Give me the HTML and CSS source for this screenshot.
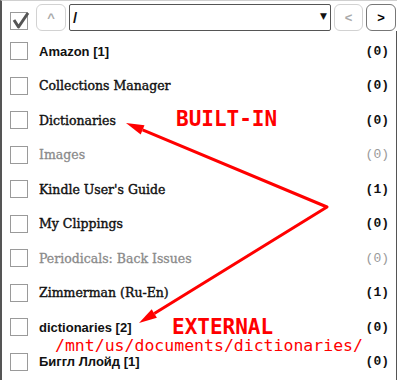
FILE: index.html
```html
<!DOCTYPE html>
<html lang="en">
<head>
  <meta charset="UTF-8">
  <title>Collections</title>
  <link rel="stylesheet" href="styles.css">
</head>
<body>
  <div class="screen">
    <!-- top toolbar -->
    <div class="toolbar">
      <span class="box checked">
        <svg width="20" height="18" viewBox="0 0 20 18"><path d="M3 8 L7.5 15 L17 1" fill="none" stroke="#555" stroke-width="3" stroke-linejoin="round"/></svg>
      </span>
      <button class="nav up">^</button>
      <div class="select">
        <span class="path">/</span>
        <span class="caret">▼</span>
      </div>
      <button class="nav prev">&lt;</button>
      <button class="nav next">&gt;</button>
    </div>

    <!-- collection list -->
    <div class="list">
      <div class="row"><span class="box"></span><span class="name sans">Amazon [1]</span><span class="count">(0)</span></div>
      <div class="row"><span class="box"></span><span class="name">Collections Manager</span><span class="count">(0)</span></div>
      <div class="row"><span class="box"></span><span class="name">Dictionaries</span><span class="count">(0)</span></div>
      <div class="row dim"><span class="box"></span><span class="name">Images</span><span class="count">(0)</span></div>
      <div class="row"><span class="box"></span><span class="name">Kindle User's Guide</span><span class="count">(1)</span></div>
      <div class="row"><span class="box"></span><span class="name">My Clippings</span><span class="count">(0)</span></div>
      <div class="row dim"><span class="box"></span><span class="name">Periodicals: Back Issues</span><span class="count">(0)</span></div>
      <div class="row"><span class="box"></span><span class="name">Zimmerman (Ru-En)</span><span class="count">(1)</span></div>
      <div class="row"><span class="box"></span><span class="name sans">dictionaries [2]</span><span class="count">(0)</span></div>
      <div class="row"><span class="box"></span><span class="name sans">Биггл Ллойд [1]</span><span class="count">(0)</span></div>
    </div>

    <!-- red annotations drawn over the list -->
    <svg class="notes" width="400" height="380" viewBox="0 0 400 380">
      <polyline points="142.6,129.9 327,207 154.3,313.5" fill="none" stroke="#f00" stroke-width="3" stroke-linejoin="round"/>
      <polygon points="126,123 144.5,125.3 140.7,134.5" fill="#f00"/>
      <polygon points="139,323 156.9,317.8 151.7,309.3" fill="#f00"/>
      <text class="label" x="176" y="126">BUILT-IN</text>
      <text class="label" x="172" y="334">EXTERNAL</text>
      <text class="label small" x="55" y="351">/mnt/us/documents/dictionaries/</text>
    </svg>
  </div>
</body>
</html>
```

FILE: styles.css
```css
/* Global */
* {
  box-sizing: border-box;
}

body {
  margin: 0;
  background: #fff;
  color: #111;
  font-family: "DejaVu Serif", serif;
}

.screen {
  position: relative;
  width: 397px;
  height: 380px;
  border-left: 2px solid #555;
  border-top: 1px solid #d0d0d0;
  overflow: hidden;
}

/* Toolbar */
.toolbar {
  display: flex;
  align-items: flex-start;
  gap: 3px;
  padding: 3px 0 0 8px;
}

.box {
  display: block;
  flex: none;
  width: 18px;
  height: 18px;
  border: 1px solid #9a9a9a;
  background: #fff;
}

.box.checked {
  position: relative;
  margin: 8px 5px 0 0;
}

.box.checked svg {
  position: absolute;
  left: 0;
  top: -1px;
}

.nav {
  width: 30px;
  height: 27px;
  padding: 0;
  border: 1px solid #d2d2d2;
  border-radius: 6px;
  background: #fff;
  color: #aaa;
  font-family: "Liberation Sans", sans-serif;
  font-size: 13px;
  font-weight: bold;
}

.nav.prev {
  width: 29px;
}

.nav.next {
  border-color: #777;
  color: #000;
}

.select {
  display: flex;
  align-items: center;
  justify-content: space-between;
  width: 262px;
  height: 27px;
  padding: 0 3px 0 3px;
  border: 1px solid #555;
  border-radius: 2px;
}

.path {
  font-family: "Liberation Sans", sans-serif;
  font-size: 15px;
  font-weight: bold;
}

.caret {
  font-family: "DejaVu Sans", sans-serif;
  font-size: 9px;
  margin-top: -3px;
}

/* List */
.list {
  border-right: 1px solid #555;
  padding-top: 3px;
  height: 360px;
}

.row {
  display: flex;
  align-items: center;
  height: 34.5px;
  padding: 0 7px 0 8px;
}

.row .box {
  margin-right: 11px;
}

.name {
  flex: 1;
  font-size: 12.5px;
  -webkit-text-stroke: 0.4px #111;
}

.name.sans {
  font-family: "Liberation Sans", sans-serif;
  font-size: 13px;
  font-weight: bold;
  -webkit-text-stroke: 0;
}

.count {
  font-family: "Liberation Mono", monospace;
  font-size: 13px;
  font-weight: bold;
}

.dim .name {
  color: #8a8a8a;
  -webkit-text-stroke: 0.3px #8a8a8a;
}

.dim .count {
  color: #9a9a9a;
  font-weight: normal;
}

/* Annotations */
.notes {
  position: absolute;
  left: -2px;
  top: -1px;
  pointer-events: none;
}

.label {
  fill: #f00;
  font-family: "DejaVu Sans Mono", monospace;
  font-size: 21px;
  font-weight: bold;
}

.label.small {
  font-size: 16.5px;
  font-weight: normal;
}
```
